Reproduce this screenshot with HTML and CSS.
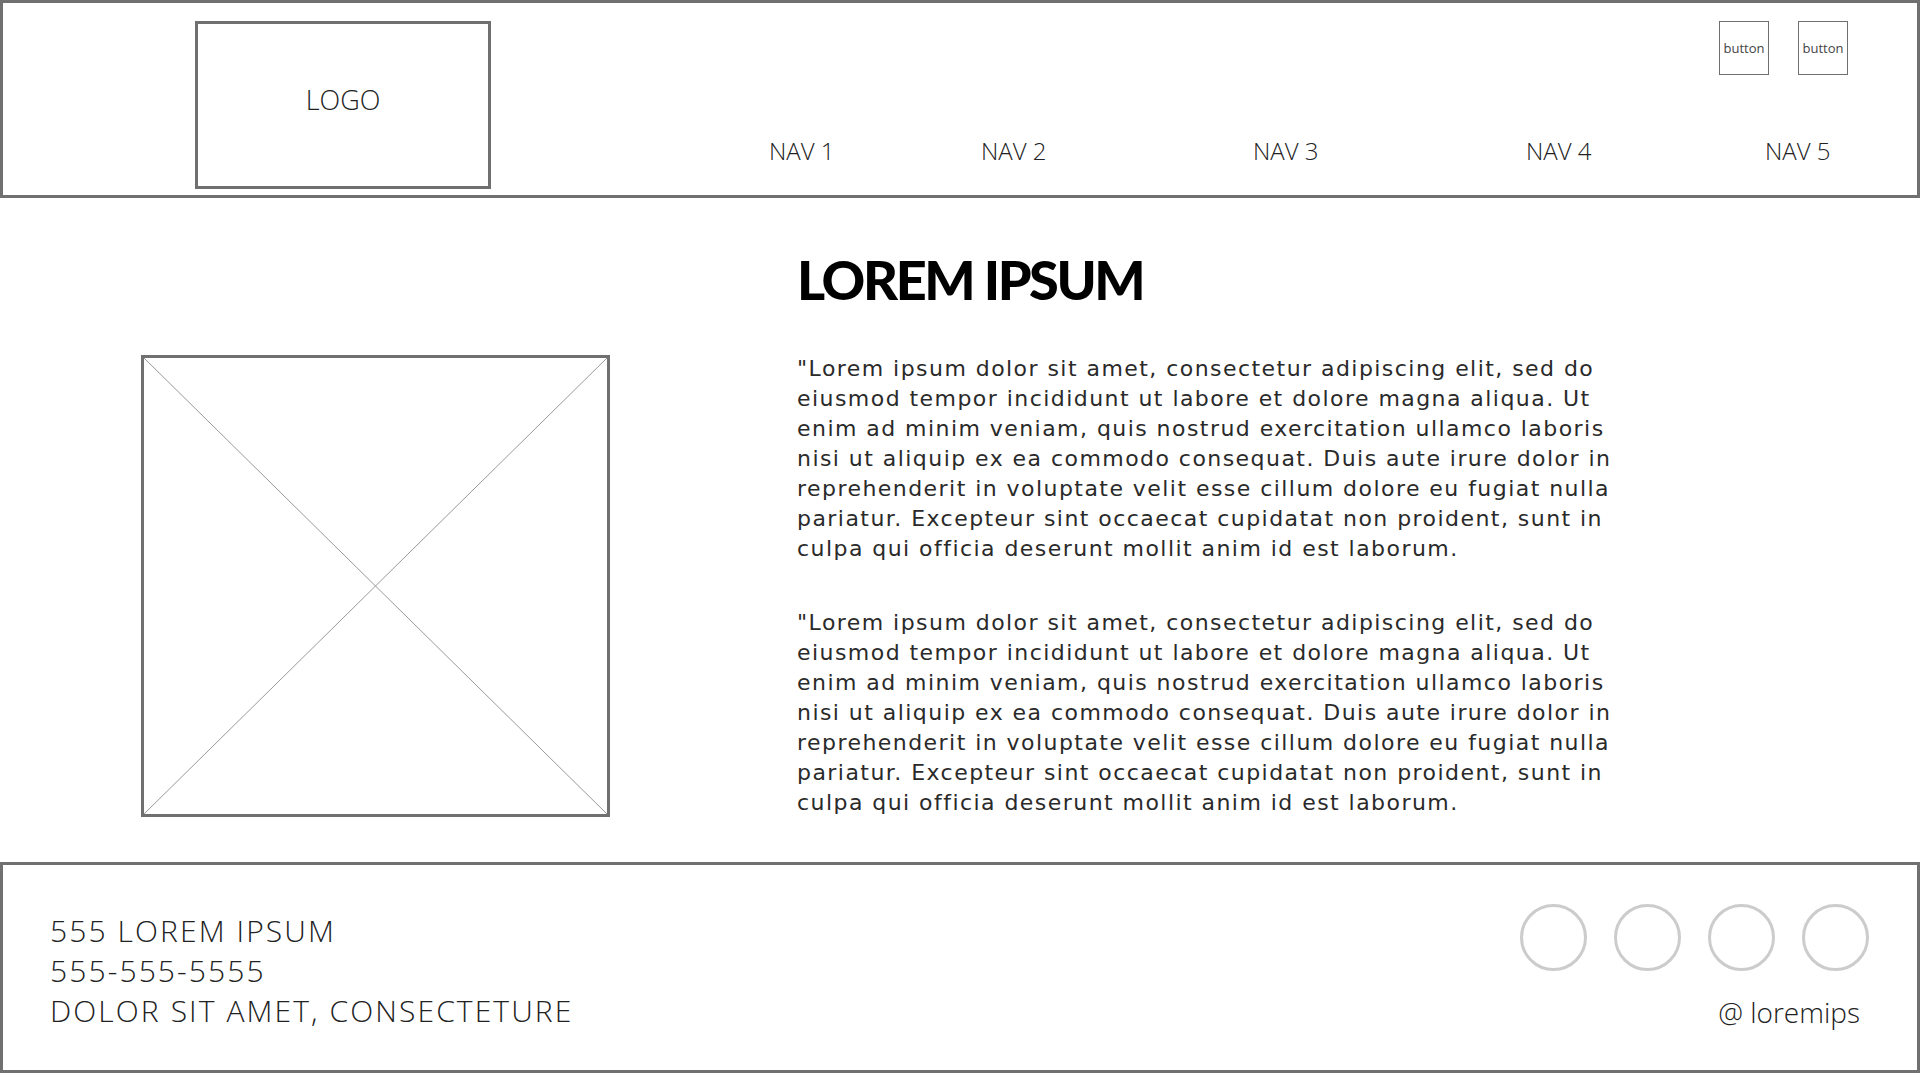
FILE: index.html
```html
<!DOCTYPE html>
<html lang="en">
<head>
    <meta charset="UTF-8">
    <meta name="viewport" content="width=device-width, initial-scale=1.0">
    <title>Wireframe</title>
    <link rel="stylesheet" href="styles.css">
</head>

<body>

    <header class="site-header">
        <div class="logo">LOGO</div>

        <div class="header-right">
            <div class="header-buttons">
                <button type="button" class="small-btn">button</button>
                <button type="button" class="small-btn">button</button>
            </div>

            <nav class="main-nav">
                <a href="#">NAV 1</a>
                <a href="#">NAV 2</a>
                <a href="#">NAV 3</a>
                <a href="#">NAV 4</a>
                <a href="#">NAV 5</a>
            </nav>
        </div>
    </header>

    <main class="content">
        <div class="placeholder">
            <svg viewBox="0 0 100 100" preserveAspectRatio="none">
                <line x1="0" y1="0" x2="100" y2="100" vector-effect="non-scaling-stroke"/>
                <line x1="100" y1="0" x2="0" y2="100" vector-effect="non-scaling-stroke"/>
            </svg>
        </div>

        <div class="text-block">
            <h1>LOREM IPSUM</h1>

            <p>"Lorem ipsum dolor sit amet, consectetur adipiscing elit, sed do eiusmod tempor incididunt ut labore et dolore magna aliqua. Ut enim ad minim veniam, quis nostrud exercitation ullamco laboris nisi ut aliquip ex ea commodo consequat. Duis aute irure dolor in reprehenderit in voluptate velit esse cillum dolore eu fugiat nulla pariatur. Excepteur sint occaecat cupidatat non proident, sunt in culpa qui officia deserunt mollit anim id est laborum.</p>

            <p>"Lorem ipsum dolor sit amet, consectetur adipiscing elit, sed do eiusmod tempor incididunt ut labore et dolore magna aliqua. Ut enim ad minim veniam, quis nostrud exercitation ullamco laboris nisi ut aliquip ex ea commodo consequat. Duis aute irure dolor in reprehenderit in voluptate velit esse cillum dolore eu fugiat nulla pariatur. Excepteur sint occaecat cupidatat non proident, sunt in culpa qui officia deserunt mollit anim id est laborum.</p>
        </div>
    </main>

    <footer class="site-footer">
        <div class="contact">
            <div>555 LOREM IPSUM</div>
            <div>555-555-5555</div>
            <div>DOLOR SIT AMET, CONSECTETURE</div>
        </div>

        <div class="social">
            <div class="circles">
                <span class="circle"></span>
                <span class="circle"></span>
                <span class="circle"></span>
                <span class="circle"></span>
            </div>
            <div class="handle">@ loremips</div>
        </div>
    </footer>

</body>
</html>
```

FILE: styles.css
```css
* {
    box-sizing: border-box;
}

body {
    margin: 0;
    padding: 0;
    font-family: "Open Sans", Arial, sans-serif;
    color: #222;
    background: #fff;
}

/* header */

.site-header {
    display: flex;
    height: 198px;
    border: 3px solid #707070;
}

.logo {
    width: 296px;
    height: 168px;
    margin: 18px 0 0 192px;
    border: 3px solid #707070;
    display: flex;
    align-items: center;
    justify-content: center;
    padding-bottom: 12px;
    font-size: 27px;
    font-weight: 300;
    color: #222;
}

.header-right {
    flex: 1;
    display: flex;
    flex-direction: column;
    justify-content: space-between;
}

.header-buttons {
    display: flex;
    justify-content: flex-end;
    gap: 29px;
    padding: 18px 69px 0 0;
}

.small-btn {
    width: 50px;
    height: 54px;
    padding: 0;
    border: 1px solid #707070;
    background: #fff;
    font-family: "Open Sans", Arial, sans-serif;
    font-size: 13px;
    color: #444;
}

.main-nav {
    display: grid;
    grid-template-columns: 212px 272px 273px 239px 1fr;
    margin-left: 278px;
    padding-bottom: 28px;
}

.main-nav a {
    font-size: 24px;
    font-weight: 300;
    line-height: 32px;
    color: #222;
    text-decoration: none;
}

/* main */

.content {
    display: flex;
    align-items: flex-start;
    height: 664px;
    padding-top: 50px;
}

.placeholder {
    width: 469px;
    height: 462px;
    margin: 107px 0 0 141px;
    border: 3px solid #707070;
}

.placeholder svg {
    display: block;
    width: 100%;
    height: 100%;
}

.placeholder line {
    stroke: #999;
    stroke-width: 1;
}

.text-block {
    width: 830px;
    margin-left: 187px;
}

h1 {
    margin: 0 0 42px;
    font-family: Lato, Arial, sans-serif;
    font-weight: 900;
    font-size: 54px;
    line-height: 64px;
    letter-spacing: -2.4px;
    color: #000;
}

.text-block p {
    margin: 0 0 44px;
    font-family: "DejaVu Sans", "Open Sans", sans-serif;
    font-size: 22px;
    line-height: 30px;
    letter-spacing: 1.45px;
    color: #2a2a2a;
}

/* footer */

.site-footer {
    display: flex;
    justify-content: space-between;
    height: 211px;
    border: 3px solid #707070;
    padding: 0 48px 0 47px;
}

.contact {
    padding-top: 46px;
    font-size: 30px;
    font-weight: 300;
    line-height: 40px;
    letter-spacing: 2.1px;
    color: #222;
}

.social {
    display: flex;
    flex-direction: column;
    align-items: flex-end;
    padding-top: 39px;
}

.circles {
    display: flex;
    gap: 27px;
}

.circle {
    width: 67px;
    height: 67px;
    border: 3px solid #ccc;
    border-radius: 50%;
}

.handle {
    margin: 25px 9px 0 0;
    font-size: 28px;
    font-weight: 300;
    line-height: 32px;
    color: #222;
}
```
